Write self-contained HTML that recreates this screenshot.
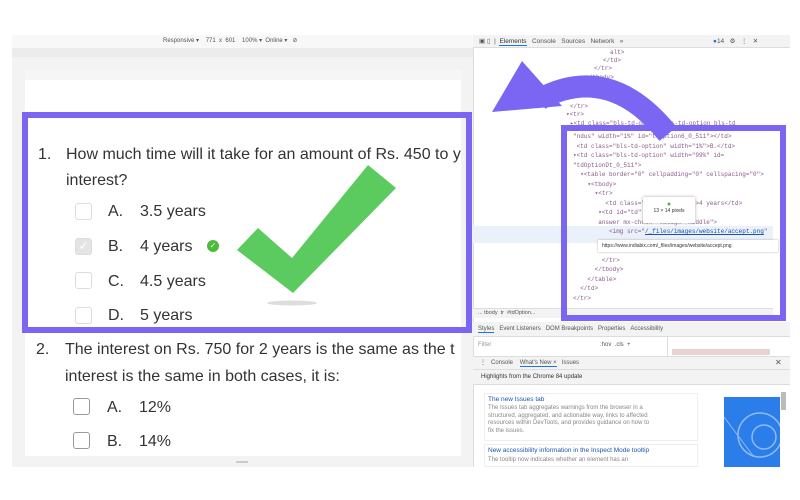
<!DOCTYPE html>
<html><head><meta charset="utf-8"><style>
*{margin:0;padding:0;box-sizing:border-box}
body{width:800px;height:500px;background:#fff;position:relative;overflow:hidden;font-family:"Liberation Sans",Arial,sans-serif}
.a{position:absolute}
.q{font-size:16px;color:#333;white-space:nowrap}
.cb{position:absolute;width:17px;height:17px;border:1.5px solid #bbb;border-radius:3px;background:#fff}
.code{font-family:"Liberation Mono",monospace;font-size:6px;color:#8a5a8a;white-space:nowrap;position:absolute}
.dt{font-size:6.5px;color:#555;white-space:nowrap;position:absolute}
</style></head><body>
<div class="a" style="left:12px;top:35px;width:461px;height:432px;background:#f3f3f3"></div>
<div class="a" style="left:12px;top:35px;width:461px;height:13px;background:#f8f8f8"></div>
<div class="dt" style="left:163px;top:37px;font-size:6px">Responsive ▾ &nbsp;&nbsp;&nbsp;771 &nbsp;x&nbsp; 601 &nbsp;&nbsp;&nbsp;100% ▾ &nbsp;Online ▾ &nbsp;&nbsp;⊘</div>
<div class="a" style="left:12px;top:48px;width:461px;height:9px;background:#ececec"></div>
<div class="a" style="left:25px;top:70px;width:436px;height:386px;background:#fff"></div>
<div class="a" style="left:25px;top:70px;width:436px;height:10px;background:#f6f6f6"></div>
<div class="a" style="left:236px;top:461px;width:12px;height:2px;background:#ccc"></div>
<div class="q a" style="left:38px;top:146px">1.</div>
<div class="q a" style="left:66px;top:146px">How much time will it take for an amount of Rs. 450 to y</div>
<div class="q a" style="left:66px;top:172px">interest?</div>
<div class="cb" style="left:75px;top:203px;border-color:#ddd"></div>
<div class="q a" style="left:108px;top:203px">A.</div><div class="q a" style="left:140px;top:203px">3.5 years</div>
<div class="cb" style="left:75px;top:238px;border-color:#ddd;background:#e4e4e4;color:#fff;font-size:12px;text-align:center;line-height:14px">✓</div>
<div class="q a" style="left:108px;top:238px">B.</div><div class="q a" style="left:140px;top:238px">4 years</div>
<div class="a" style="left:207px;top:240px;width:12px;height:12px;border-radius:50%;background:#4cbb3a;color:#fff;font-size:8px;text-align:center;line-height:12px">✓</div>
<div class="cb" style="left:75px;top:272px;border-color:#ddd"></div>
<div class="q a" style="left:108px;top:273px">C.</div><div class="q a" style="left:140px;top:273px">4.5 years</div>
<div class="cb" style="left:75px;top:307px;border-color:#ddd"></div>
<div class="q a" style="left:108px;top:307px">D.</div><div class="q a" style="left:140px;top:307px">5 years</div>
<div class="q a" style="left:36px;top:341px">2.</div>
<div class="q a" style="left:65px;top:341px">The interest on Rs. 750 for 2 years is the same as the t</div>
<div class="q a" style="left:65px;top:368px">interest is the same in both cases, it is:</div>
<div class="cb" style="left:73px;top:398px;border-color:#999"></div>
<div class="q a" style="left:107px;top:399px">A.</div><div class="q a" style="left:139px;top:399px">12%</div>
<div class="cb" style="left:73px;top:432px;border-color:#999"></div>
<div class="q a" style="left:107px;top:433px">B.</div><div class="q a" style="left:139px;top:433px">14%</div>

<div class="a" style="left:473px;top:35px;width:317px;height:432px;background:#fff;border-left:1px solid #ddd"></div>
<div class="a" style="left:473px;top:35px;width:317px;height:13px;background:#f3f3f3;border-bottom:1px solid #ddd"></div>
<div class="dt" style="left:479px;top:37px">▣ ▯ &nbsp;|&nbsp; <span style="color:#333;border-bottom:1px solid #1a73e8">Elements</span> &nbsp;&nbsp;Console &nbsp;&nbsp;Sources &nbsp;&nbsp;Network &nbsp;&nbsp;»</div>
<div class="dt" style="left:713px;top:37px"><span style="color:#1a73e8">●</span>14 &nbsp;&nbsp;⚙ &nbsp;&nbsp;⋮ &nbsp;&nbsp;✕</div>
<div class="code" style="left:610px;top:49px">alt&gt;</div>
<div class="code" style="left:603px;top:57px">&lt;/td&gt;</div>
<div class="code" style="left:594px;top:65px">&lt;/tr&gt;</div>
<div class="code" style="left:585px;top:74px">&lt;/tbody&gt;</div>
<div class="code" style="left:570px;top:103px">&lt;/tr&gt;</div>
<div class="code" style="left:566px;top:111px">▾&lt;tr&gt;</div>
<div class="code" style="left:570px;top:120px">▸&lt;td class="bls-td-option bls-td-option bls-td</div>
<div class="a" style="left:473px;top:226px;width:300px;height:17px;background:#eaf1fb"></div>
<div class="code" style="left:573px;top:132px;line-height:9.5px">"ndus" width="1%" id="tdOption6_0_511"&gt;&lt;/td&gt;<br>&nbsp;&lt;td class="bls-td-option" width="1%"&gt;B.&lt;/td&gt;<br>▾&lt;td class="bls-td-option" width="99%" id=<br>"tdOptionDt_0_511"&gt;<br>&nbsp;&nbsp;▾&lt;table border="0" cellpadding="0" cellspacing="0"&gt;<br>&nbsp;&nbsp;&nbsp;&nbsp;▾&lt;tbody&gt;<br>&nbsp;&nbsp;&nbsp;&nbsp;&nbsp;&nbsp;▾&lt;tr&gt;<br>&nbsp;&nbsp;&nbsp;&nbsp;&nbsp;&nbsp;&nbsp;&nbsp;&nbsp;&lt;td class="bls-td-option"&gt;4 years&lt;/td&gt;<br>&nbsp;&nbsp;&nbsp;&nbsp;&nbsp;&nbsp;&nbsp;▾&lt;td id="td" class="js-img<br>&nbsp;&nbsp;&nbsp;&nbsp;&nbsp;&nbsp;&nbsp;answer mx-check" valign="middle"&gt;<br>&nbsp;&nbsp;&nbsp;&nbsp;&nbsp;&nbsp;&nbsp;&nbsp;&nbsp;&nbsp;&lt;img src="<span style="color:#1a4fb0;text-decoration:underline">/_files/images/website/accept.png</span>"<br><br><br>&nbsp;&nbsp;&nbsp;&nbsp;&nbsp;&nbsp;&nbsp;&nbsp;&lt;/tr&gt;<br>&nbsp;&nbsp;&nbsp;&nbsp;&nbsp;&nbsp;&lt;/tbody&gt;<br>&nbsp;&nbsp;&nbsp;&nbsp;&lt;/table&gt;<br>&nbsp;&nbsp;&lt;/td&gt;<br>&lt;/tr&gt;</div>
<div class="a" style="left:643px;top:197px;width:52px;height:26px;background:#fff;box-shadow:0 0 3px #aaa;font-size:5px;color:#333;text-align:center;padding-top:4px"><span style="color:#4cbb3a;font-size:7px">●</span><br>13 × 14 pixels</div>
<div class="a" style="left:598px;top:240px;width:180px;height:12px;background:#fff;box-shadow:0 0 2px #aaa;font-size:5px;color:#333;padding:3px 4px;white-space:nowrap;overflow:hidden">https://www.indiabix.com/_files/images/website/accept.png</div>
<div class="a" style="left:473px;top:308px;width:300px;height:10px;background:#f3f3f3;border-top:1px solid #ddd"></div>
<div class="dt" style="left:478px;top:310px;font-size:5.5px">... tbody &nbsp;tr &nbsp;#tdOption...</div>
<div class="a" style="left:473px;top:322px;width:317px;height:15px;background:#f3f3f3;border-bottom:1px solid #ddd"></div>
<div class="dt" style="left:478px;top:326px;font-size:6px"><span style="border-bottom:1px solid #1a73e8">Styles</span> &nbsp;&nbsp;Event Listeners &nbsp;&nbsp;DOM Breakpoints &nbsp;&nbsp;Properties &nbsp;&nbsp;Accessibility</div>
<div class="dt" style="left:478px;top:342px;font-size:6px;color:#999">Filter</div>
<div class="dt" style="left:600px;top:342px;font-size:6px">:hov &nbsp;.cls &nbsp;+</div>
<div class="a" style="left:667px;top:337px;width:1px;height:19px;background:#ddd"></div>
<div class="a" style="left:672px;top:349px;width:98px;height:6px;background:#e8d3cf"></div>
<div class="a" style="left:473px;top:356px;width:317px;height:14px;background:#f3f3f3;border-top:1px solid #ddd;border-bottom:1px solid #ddd"></div>
<div class="dt" style="left:480px;top:359px;font-size:6px">⋮ &nbsp;&nbsp;Console &nbsp;&nbsp;&nbsp;<span style="border-bottom:1px solid #1a73e8">What's New ×</span> &nbsp;&nbsp;Issues</div>
<div class="dt" style="left:775px;top:358px;font-size:8px">✕</div>
<div class="a" style="left:473px;top:370px;width:317px;height:15px;background:#f3f3f3;border-bottom:1px solid #ddd"></div>
<div class="dt" style="left:481px;top:374px;font-size:6px;color:#333">Highlights from the Chrome 84 update</div>
<div class="a" style="left:484px;top:393px;width:214px;height:48px;border:1px solid #eee"></div>
<div class="dt" style="left:488px;top:396px;font-size:6.5px;color:#1a56b0">The new Issues tab</div>
<div class="dt" style="left:488px;top:405px;font-size:6px;color:#888;line-height:7.5px">The Issues tab aggregates warnings from the browser in a<br>structured, aggregated, and actionable way, links to affected<br>resources within DevTools, and provides guidance on how to<br>fix the issues.</div>
<div class="a" style="left:484px;top:444px;width:214px;height:23px;border:1px solid #eee"></div>
<div class="dt" style="left:488px;top:447px;font-size:6.5px;color:#1a56b0">New accessibility information in the Inspect Mode tooltip</div>
<div class="dt" style="left:488px;top:457px;font-size:6px;color:#888">The tooltip now indicates whether an element has an</div>
<div class="a" style="left:724px;top:397px;width:56px;height:70px;background:#2b7de9;overflow:hidden">
<svg width="56" height="70"><circle cx="36" cy="38" r="22" fill="none" stroke="#8fbaf5" stroke-width="1.5"/><circle cx="40" cy="40" r="12" fill="none" stroke="#8fbaf5" stroke-width="1.5"/><line x1="0" y1="20" x2="30" y2="60" stroke="#8fbaf5"/></svg></div>
<div class="a" style="left:781px;top:392px;width:5px;height:18px;background:#bbb"></div>

<svg class="a" style="left:0;top:0" width="800" height="500">
<polygon points="237,250 258,228 292,258 368,165 396,188 293,293" fill="#5ccb5f"/>
<ellipse cx="292" cy="303" rx="25" ry="2.5" fill="#ddd"/>
<rect x="25" y="115" width="444" height="215" fill="none" stroke="#7b66f3" stroke-width="6"/>
<rect x="564" y="128" width="219" height="190" fill="none" stroke="#7b66f3" stroke-width="6"/>
<path d="M540,99 Q610,62 668,134" fill="none" stroke="#7b66f3" stroke-width="22"/>
<polygon points="522,61 492,112 562,106" fill="#7b66f3"/>
</svg>
</body></html>
